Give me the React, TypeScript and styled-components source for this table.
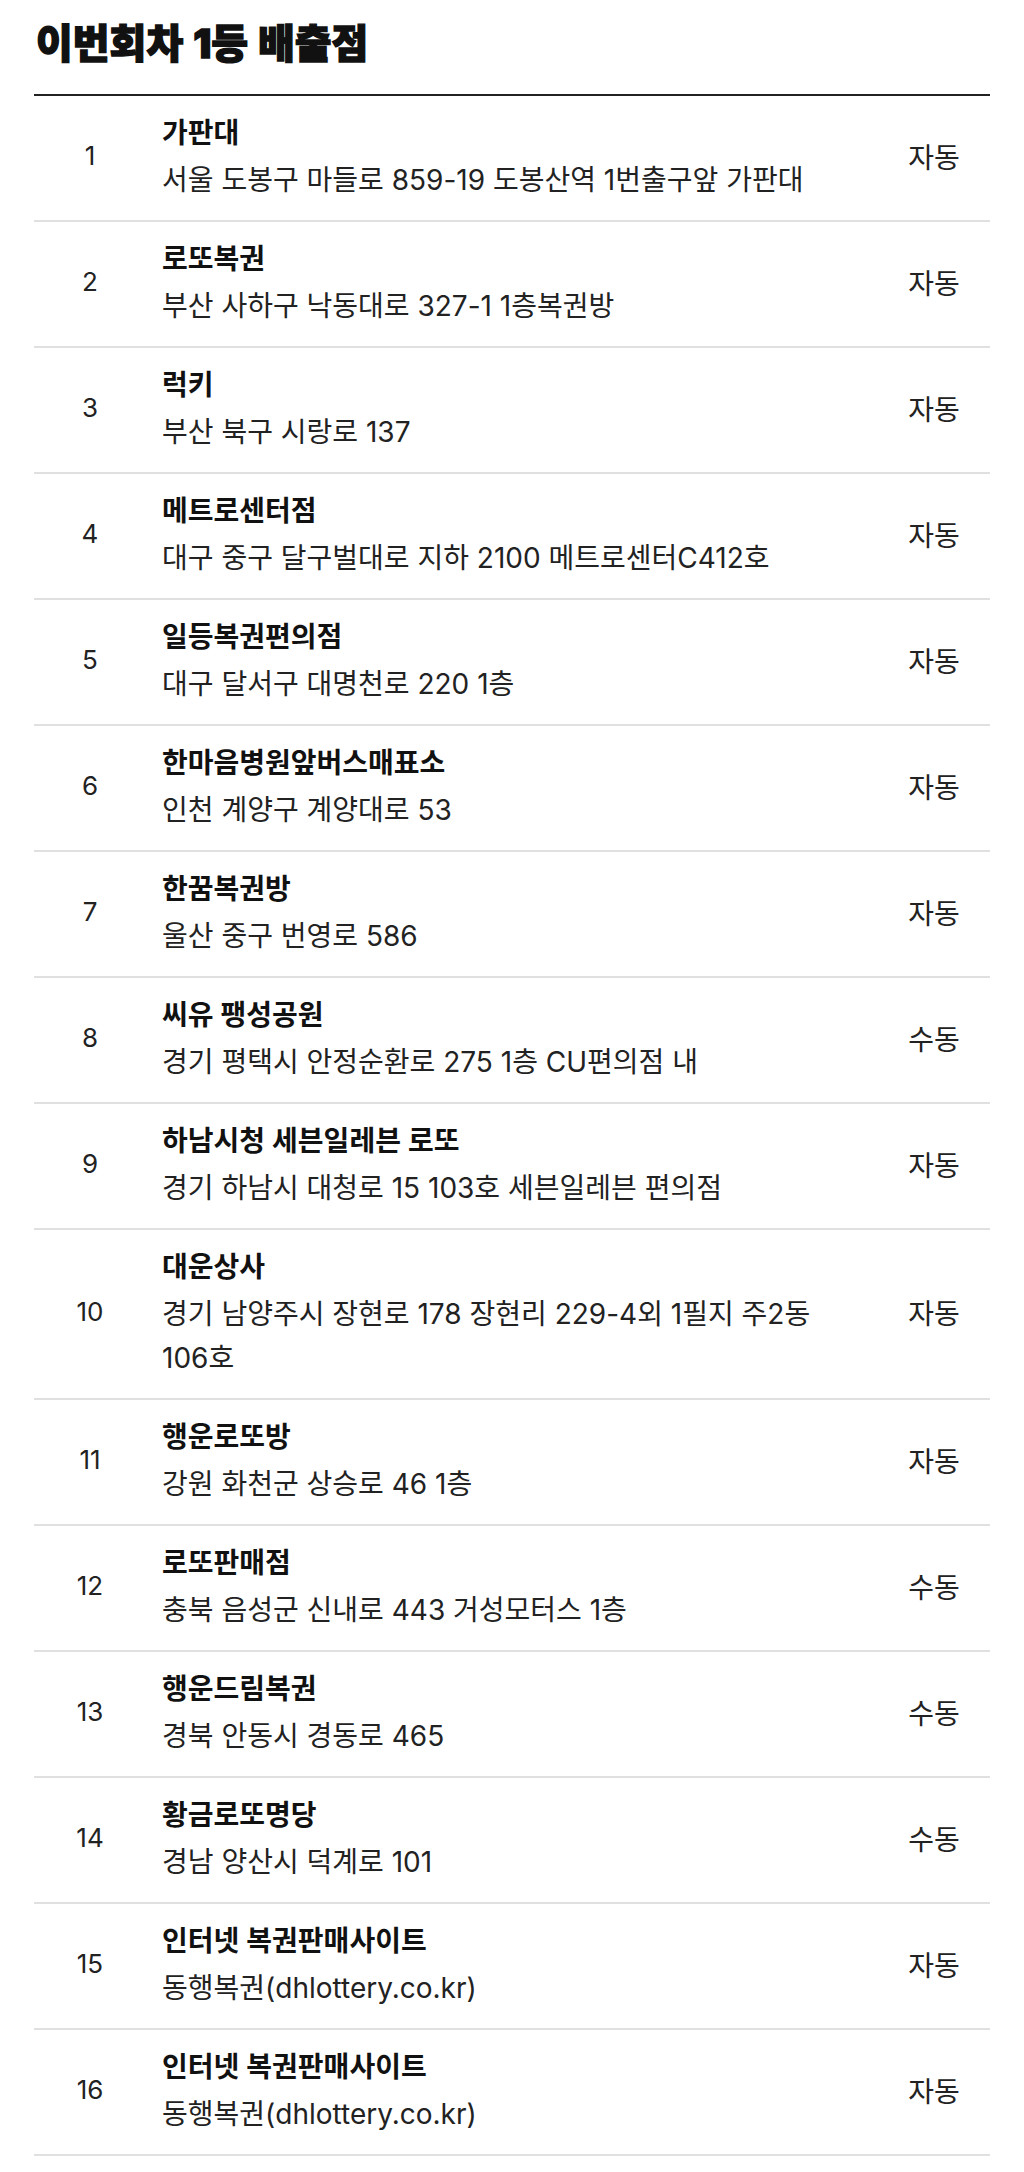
import styled, { createGlobalStyle } from 'styled-components';

type Store = {
    rank: number;
    name: string;
    address: string;
    method: '자동' | '수동';
};

const stores: Store[] = [
    { rank: 1, name: '가판대', address: '서울 도봉구 마들로 859-19 도봉산역 1번출구앞 가판대', method: '자동' },
    { rank: 2, name: '로또복권', address: '부산 사하구 낙동대로 327-1 1층복권방', method: '자동' },
    { rank: 3, name: '럭키', address: '부산 북구 시랑로 137', method: '자동' },
    { rank: 4, name: '메트로센터점', address: '대구 중구 달구벌대로 지하 2100 메트로센터C412호', method: '자동' },
    { rank: 5, name: '일등복권편의점', address: '대구 달서구 대명천로 220 1층', method: '자동' },
    { rank: 6, name: '한마음병원앞버스매표소', address: '인천 계양구 계양대로 53', method: '자동' },
    { rank: 7, name: '한꿈복권방', address: '울산 중구 번영로 586', method: '자동' },
    { rank: 8, name: '씨유 팽성공원', address: '경기 평택시 안정순환로 275 1층 CU편의점 내', method: '수동' },
    { rank: 9, name: '하남시청 세븐일레븐 로또', address: '경기 하남시 대청로 15 103호 세븐일레븐 편의점', method: '자동' },
    { rank: 10, name: '대운상사', address: '경기 남양주시 장현로 178 장현리 229-4외 1필지 주2동 106호', method: '자동' },
    { rank: 11, name: '행운로또방', address: '강원 화천군 상승로 46 1층', method: '자동' },
    { rank: 12, name: '로또판매점', address: '충북 음성군 신내로 443 거성모터스 1층', method: '수동' },
    { rank: 13, name: '행운드림복권', address: '경북 안동시 경동로 465', method: '수동' },
    { rank: 14, name: '황금로또명당', address: '경남 양산시 덕계로 101', method: '수동' },
    { rank: 15, name: '인터넷 복권판매사이트', address: '동행복권(dhlottery.co.kr)', method: '자동' },
    { rank: 16, name: '인터넷 복권판매사이트', address: '동행복권(dhlottery.co.kr)', method: '자동' },
];

const GlobalStyle = createGlobalStyle`
  body {
    margin: 0;
    background: #fff;
    font-family: Inter, "Noto Sans CJK KR", sans-serif;
    color: #111;
  }
`;

const Page = styled.div`
  padding: 22px 34px 16px;
`;

const Title = styled.h2`
  margin: 0 0 28px 2px;
  font-size: 40px;
  line-height: 44px;
  font-weight: 900;
  letter-spacing: 0;
  word-spacing: 2px;
  color: #111;
  -webkit-text-stroke: 1.4px #111;
`;

const List = styled.ul`
  list-style: none;
  margin: 0;
  padding: 0;
  border-top: 2px solid #222;
`;

const Row = styled.li`
  display: grid;
  grid-template-columns: 112px 1fr 112px;
  align-items: center;
  padding: 18px 0;
  border-bottom: 2px solid #e0e0e0;
`;

const Rank = styled.span`
  text-align: center;
  font-size: 26px;
  padding-bottom: 5px;
  color: #222;
`;

const Info = styled.div`
  padding-left: 16px;
  padding-right: 12px;
  display: flex;
  flex-direction: column;
  gap: 6px;
  word-break: keep-all;
`;

const Name = styled.strong`
  font-size: 28px;
  line-height: 38px;
  font-weight: 600;
  color: #111;
`;

const Address = styled.span`
  font-size: 28px;
  line-height: 44px;
  color: #222;
`;

const Method = styled.span`
  text-align: center;
  font-size: 28px;
  padding-bottom: 5px;
  color: #222;
`;

export default function App() {
    return (
        <>
            <GlobalStyle />
            <Page>
                <Title>이번회차 1등 배출점</Title>
                <List>
                    {stores.map((store) => (
                        <Row key={store.rank}>
                            <Rank>{store.rank}</Rank>
                            <Info>
                                <Name>{store.name}</Name>
                                <Address>{store.address}</Address>
                            </Info>
                            <Method>{store.method}</Method>
                        </Row>
                    ))}
                </List>
            </Page>
        </>
    );
}
